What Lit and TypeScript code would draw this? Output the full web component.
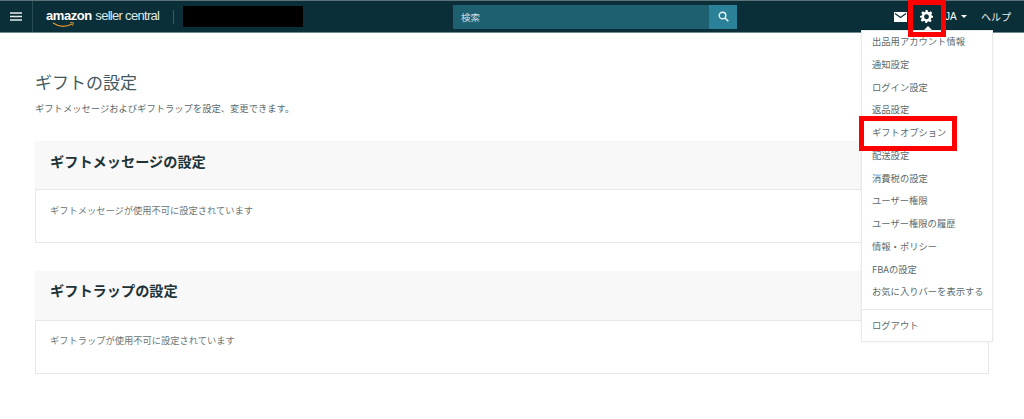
import { LitElement, html, css } from "lit";
import { customElement } from "lit/decorators.js";

const MENU = ["出品用アカウント情報","通知設定","ログイン設定","返品設定","ギフトオプション","配送設定","消費税の設定","ユーザー権限","ユーザー権限の履歴","情報・ポリシー","FBAの設定","お気に入りバーを表示する"];

@customElement("app-root")
export class AppRoot extends LitElement {
  static styles = css`
    :host { display: block; position: relative; width: 1024px; height: 419px; overflow: hidden; background: #fff;
      font-family: "Noto Sans CJK JP", "Liberation Sans", sans-serif; color: #5f6b6b; }
    .nav { height: 31px; background: #0a2f38; border-top: 1px solid #5d7277; border-bottom: 1px solid #6c8a90; display: flex; align-items: center; color: #fff; position: relative; }
    .burger { width: 33px; height: 31px; box-sizing: border-box; border-right: 1px solid #2a4c54; display: flex; align-items: center; justify-content: center; flex: none; }
    .logo { margin-left: 13px; width: 127px; flex: none; position: relative; font-family: "Liberation Sans", sans-serif; font-size: 13px; line-height: 14px; white-space: nowrap; height: 24px; padding-top: 4px; box-sizing: border-box; }
    .logo b { letter-spacing: -0.45px; }
    .logo span { font-weight: 400; color: #dfe7e8; font-size: 13px; letter-spacing: -0.7px; }
    .logo svg { position: absolute; left: 6px; top: 17px; }
    .vr { width: 1px; height: 14px; background: #3c5a61; flex: none; }
    .redact { width: 120px; height: 21px; background: #000; margin-left: 9px; flex: none; }
    .search { margin-left: 150px; width: 284px; height: 24px; display: flex; flex: none; background: #1f6070; }
    .search .ph { flex: 1; font-size: 9.5px; line-height: 24px; padding-left: 8px; color: #cfdcdf; }
    .search .btn { width: 28px; background: #2a8198; display: flex; align-items: center; justify-content: center; }
    .right { margin-left: auto; display: flex; align-items: center; flex: none; }
    .mail { margin-right: 13px; display: block; }
    .gear { margin-right: 12px; display: block; }
    .ja { font-family: "Liberation Sans", sans-serif; font-size: 10px; display: flex; align-items: center; gap: 4px; width: 36px; }
    .caret { width: 0; height: 0; border: 3px solid transparent; border-top: 3px solid #fff; border-bottom: 0; }
    .help { font-size: 10px; margin-right: 13px; color: #e8eeee; }
    .main { padding: 36px 35px 0 35px; }
    h1 { margin: 0; font-size: 17px; font-weight: 400; line-height: 26px; color: #44595d; }
    .sub { margin: 6px 0 0 0; font-size: 9.3px; line-height: 14px; color: #5b6a6c; }
    .card { margin-top: 28px; }
    .first { margin-top: 26px; }
    .card .hd { height: 48px; background: #f8f8f8; padding-left: 15px; font-size: 14.2px; font-weight: 700; line-height: 41px; color: #1d3338; }
    .card .bd { height: 54px; box-sizing: border-box; border: 1px solid #e6e8e8; background: #fff; padding: 13px 0 0 14px; font-size: 9.25px; line-height: 14px; color: #6b7676; }
    .second .hd { height: 49px; line-height: 39px; }
    .second .bd { padding-top: 12px; }
    .menu { position: absolute; left: 861px; top: 30px; width: 132px; height: 312px; box-sizing: border-box; background: #fff; border: 1px solid #e8eaea; box-shadow: 0 0 2px rgba(0,0,0,.08); font-size: 9.3px; color: #5b6a6c; }
    .menu .it { height: 22.75px; line-height: 22.75px; padding-left: 10px; white-space: nowrap; }
    .menu .list { margin-top: -1px; }
    .menu .sep { border-top: 1px solid #e8eaea; margin-top: 6px; }
    .menu .out { height: 31px; line-height: 31px; padding-left: 10px; }
    .notch { position: absolute; left: 923px; top: 26px; width: 0; height: 0; border: 5px solid transparent; border-bottom-color: #fff; border-top: 0; }
    .red { position: absolute; box-sizing: border-box; border: 5px solid #f00; }
    .r1 { left: 908px; top: 0; width: 38px; height: 37px; }
    .r2 { left: 859px; top: 116px; width: 98px; height: 35px; }
  `;

  render() {
    return html`
      <div class="nav">
        <div class="burger">
          <svg width="12" height="9" viewBox="0 0 12 9"><path d="M0 1h12M0 4.5h12M0 8h12" stroke="#e6ecec" stroke-width="1.4"/></svg>
        </div>
        <div class="logo"><b>amazon</b> <span>seller central</span>
          <svg width="24" height="6" viewBox="0 0 24 6"><path d="M1 1c6 4 13 4 19 1" stroke="#e8962e" stroke-width="1.2" fill="none"/><path d="M18 0.5l3.5 0.3-1 3" stroke="#e8962e" stroke-width="0.9" fill="none"/></svg>
        </div>
        <div class="vr"></div>
        <div class="redact"></div>
        <div class="search">
          <div class="ph">検索</div>
          <div class="btn">
            <svg width="11" height="11" viewBox="0 0 11 11"><circle cx="4.5" cy="4.5" r="3.3" stroke="#e8f1f3" stroke-width="1.4" fill="none"/><path d="M7 7l3.3 3.3" stroke="#e8f1f3" stroke-width="1.6"/></svg>
          </div>
        </div>
        <div class="right">
          <svg class="mail" width="13" height="10" viewBox="0 0 13 10"><path d="M0.5 0h12a.5.5 0 0 1 .5.5v9a.5.5 0 0 1-.5.5H.5a.5.5 0 0 1-.5-.5v-9A.5.5 0 0 1 .5 0z" fill="#fff"/><path d="M1 1.500l5.500 4 5.500-4" stroke="#0a2f38" stroke-width="1.2" fill="none"/></svg>
          <svg class="gear" width="13" height="13" viewBox="0 0 24 24"><path fill="#fff" fill-rule="evenodd" d="M10 0h4l.7 3.300 2.200.9L19.800 2.400l2.800 2.800-1.800 2.900.9 2.200L24 11v3l-3.300.7-.9 2.200 1.800 2.900-2.800 2.800-2.900-1.800-2.200.9L13 24h-3l-.7-3.300-2.200-.9-2.900 1.800-2.800-2.800 1.800-2.900-.9-2.200L0 14v-3l3.300-.7.9-2.200L2.400 5.200l2.800-2.800 2.900 1.800 2.200-.9L10 0zm2 8a4.500 4.500 0 1 0 0 9 4.500 4.500 0 0 0 0-9z"/></svg>
          <div class="ja">JA<span class="caret"></span></div>
          <div class="help">ヘルプ</div>
        </div>
      </div>

      <div class="main">
        <h1>ギフトの設定</h1>
        <p class="sub">ギフトメッセージおよびギフトラップを設定、変更できます。</p>
        <section class="card first">
          <div class="hd">ギフトメッセージの設定</div>
          <div class="bd">ギフトメッセージが使用不可に設定されています</div>
        </section>
        <section class="card second">
          <div class="hd">ギフトラップの設定</div>
          <div class="bd">ギフトラップが使用不可に設定されています</div>
        </section>
      </div>

      <div class="notch"></div>
      <div class="menu">
        <div class="list">${MENU.map((m) => html`<div class="it">${m}</div>`)}</div>
        <div class="sep"></div>
        <div class="out">ログアウト</div>
      </div>
      <div class="red r1"></div>
      <div class="red r2"></div>
    `;
  }
}
